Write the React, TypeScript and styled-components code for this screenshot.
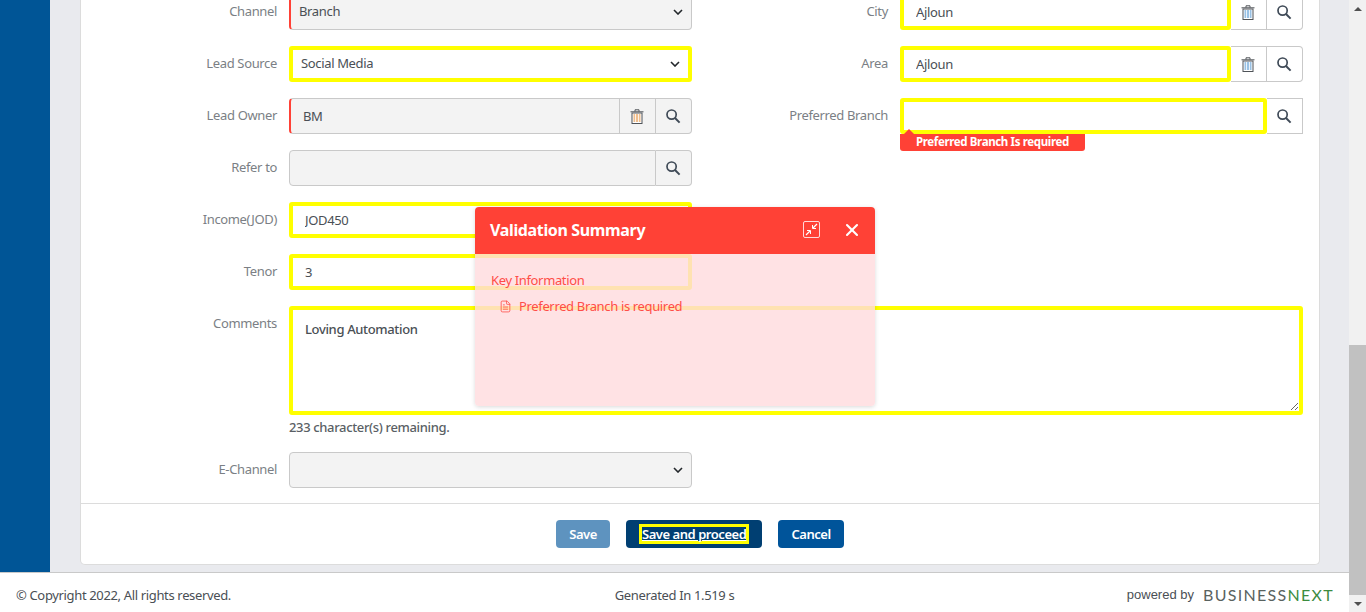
import React from 'react';
import styled, { createGlobalStyle, css } from 'styled-components';
import { FileText, X } from 'lucide-react';

const GlobalStyle = createGlobalStyle`
  html, body {
    margin: 0;
    height: 100%;
    overflow: hidden;
    font-family: "Noto Sans", "Open Sans", sans-serif;
    font-size: 13px;
    letter-spacing: -0.35px;
    color: #4a4f55;
  }
  * {
    box-sizing: border-box;
  }
  input, select, textarea, button {
    letter-spacing: inherit;
  }
`;

const chevron = encodeURIComponent(
  '<svg xmlns="http://www.w3.org/2000/svg" width="10" height="6" viewBox="0 0 10 6"><path d="M1 1l4 4 4-4" fill="none" stroke="#23272b" stroke-width="1.6"/></svg>'
);

function SearchIcon() {
  return (
    <svg width="16" height="16" viewBox="0 0 16 16" fill="none">
      <circle cx="6.6" cy="6.6" r="4.6" stroke="#3f4a57" strokeWidth="1.7" />
      <path d="M10 10l4.6 4.6" stroke="#3f4a57" strokeWidth="2" />
    </svg>
  );
}

function TrashIcon({ tint }: { tint: string }) {
  return (
    <svg width="14" height="15" viewBox="0 0 14 15" fill="none">
      <path d="M0.5 2.8h13" stroke="#4f5358" strokeWidth="1" />
      <path d="M5 2.5V0.8h4v1.7" stroke="#4f5358" strokeWidth="1" />
      <rect x="2" y="4" width="10" height="10.5" fill="#fff" stroke="#4f5358" />
      <rect x="3.5" y="5" width="7" height="8" fill={tint} opacity="0.7" />
      <path d="M5.5 5v8M8.5 5v8" stroke="#fff" strokeWidth="0.8" />
    </svg>
  );
}

function CollapseIcon() {
  return (
    <svg width="17" height="17" viewBox="0 0 17 17" fill="none">
      <rect x="0.5" y="0.5" width="16" height="16" rx="1.5" stroke="#ffd9d9" />
      <path d="M10 7l4-4M3 14l4-4" stroke="#fff" strokeWidth="1.2" />
      <path d="M9.5 4v3.5H13M4 9.5h3.5V13" stroke="#fff" strokeWidth="1" />
    </svg>
  );
}

export default function App() {
  return (
    <Shell>
      <GlobalStyle />
      <Page>
        <Main>
          <Sidebar />
          <Content>
            <Card>
              <FormGrid>
                <Field>
                  <Label>Channel</Label>
                  <Select $required disabled defaultValue="Branch">
                    <option>Branch</option>
                  </Select>
                </Field>
                <Field>
                  <Label>City</Label>
                  <LookupGroup>
                    <TextInput $flagged defaultValue="Ajloun" />
                    <AddonButton>
                      <TrashIcon tint="#6da7d8" />
                    </AddonButton>
                    <AddonButton $last>
                      <SearchIcon />
                    </AddonButton>
                  </LookupGroup>
                </Field>

                <Field>
                  <Label>Lead Source</Label>
                  <Select $flagged defaultValue="Social Media">
                    <option>Social Media</option>
                  </Select>
                </Field>
                <Field>
                  <Label>Area</Label>
                  <LookupGroup>
                    <TextInput $flagged defaultValue="Ajloun" />
                    <AddonButton>
                      <TrashIcon tint="#6da7d8" />
                    </AddonButton>
                    <AddonButton $last>
                      <SearchIcon />
                    </AddonButton>
                  </LookupGroup>
                </Field>

                <Field>
                  <Label>Lead Owner</Label>
                  <LookupGroup>
                    <TextInput $required $joined readOnly defaultValue="BM" />
                    <AddonButton $muted>
                      <TrashIcon tint="#e8a25e" />
                    </AddonButton>
                    <AddonButton $muted $last>
                      <SearchIcon />
                    </AddonButton>
                  </LookupGroup>
                </Field>
                <Field>
                  <Label>Preferred Branch</Label>
                  <LookupGroup>
                    <TextInput $flagged />
                    <AddonButton $last $square>
                      <SearchIcon />
                    </AddonButton>
                    <ErrorTip>Preferred Branch Is required</ErrorTip>
                  </LookupGroup>
                </Field>

                <Field>
                  <Label>Refer to</Label>
                  <LookupGroup>
                    <TextInput $muted $joined readOnly />
                    <AddonButton $muted $last>
                      <SearchIcon />
                    </AddonButton>
                  </LookupGroup>
                </Field>
                <span />

                <Field>
                  <Label>Income(JOD)</Label>
                  <TextInput $flagged defaultValue="JOD450" />
                </Field>
                <span />

                <Field>
                  <Label>Tenor</Label>
                  <TextInput $flagged defaultValue="3" />
                </Field>
                <span />

                <WideField>
                  <Label>Comments</Label>
                  <div>
                    <CommentBox defaultValue="Loving Automation" />
                    <Hint>233 character(s) remaining.</Hint>
                  </div>
                </WideField>

                <Field>
                  <Label>E-Channel</Label>
                  <Select $muted defaultValue="">
                    <option value=""></option>
                  </Select>
                </Field>
              </FormGrid>
              <ActionBar>
                <ActionButton $tone="#5e93bf">Save</ActionButton>
                <ActionButton $tone="#003f72">
                  <FocusedLabel>Save and proceed</FocusedLabel>
                </ActionButton>
                <ActionButton $tone="#00549a">Cancel</ActionButton>
              </ActionBar>
            </Card>
          </Content>
        </Main>
        <Footer>
          <div>© Copyright 2022, All rights reserved.</div>
          <div>Generated In 1.519 s</div>
          <FooterEnd>
            <PoweredBy>powered by</PoweredBy>
            <Logo>
              BUSINESS<LogoAccent>NEXT</LogoAccent>
            </Logo>
          </FooterEnd>
        </Footer>
      </Page>
      <Scrollbar>
        <ScrollArrow>
          <ArrowUp />
        </ScrollArrow>
        <ScrollTrack>
          <ScrollThumb />
        </ScrollTrack>
        <ScrollArrow>
          <ArrowDown />
        </ScrollArrow>
      </Scrollbar>

      <SummaryModal>
        <SummaryHeader>
          <SummaryTitle>Validation Summary</SummaryTitle>
          <HeaderIcons>
            <CollapseIcon />
            <X size={20} color="#fff" strokeWidth={2.5} />
          </HeaderIcons>
        </SummaryHeader>
        <SummaryBody>
          <SummaryGroup>Key Information</SummaryGroup>
          <SummaryItem>
            <FileText size={13} strokeWidth={1.5} />
            Preferred Branch is required
          </SummaryItem>
        </SummaryBody>
      </SummaryModal>
    </Shell>
  );
}

const Shell = styled.div`
  display: flex;
  height: 612px;
  overflow: hidden;
  position: relative;
`;

const Page = styled.div`
  flex: 1;
  min-width: 0;
  display: flex;
  flex-direction: column;
`;

const Main = styled.div`
  flex: 1;
  min-height: 0;
  display: flex;
  background: #e9eaee;
  overflow: hidden;
`;

const Sidebar = styled.aside`
  width: 50px;
  flex: none;
  background: #005596;
`;

const Content = styled.main`
  flex: 1;
  min-width: 0;
  display: flex;
  flex-direction: column;
  justify-content: flex-end;
  padding: 0 29px 7px 30px;
`;

const Card = styled.section`
  background: #fff;
  border: 1px solid #dcdcdc;
  border-top: none;
  border-radius: 0 0 5px 5px;
`;

const FormGrid = styled.div`
  display: grid;
  grid-template-columns: 611px 611px;
  row-gap: 16px;
  padding-bottom: 15px;
`;

const Field = styled.div`
  display: grid;
  grid-template-columns: 196px 1fr;
  column-gap: 12px;
  align-items: start;
`;

const WideField = styled(Field)`
  grid-column: 1 / -1;
`;

const Label = styled.label`
  text-align: right;
  color: #7b7f85;
  line-height: 34px;
`;

const flaggedBorder = css`
  background-color: #fff;
  border: 4px solid #ffff00;
  border-radius: 3px;
`;

const mutedBorder = css`
  background-color: #f3f3f3;
  border: 1px solid #c9c9c9;
  border-radius: 4px;
`;

const requiredBorder = css`
  ${mutedBorder};
  border-left: 2px solid #ff4136;
`;

type ControlProps = {
  $flagged?: boolean;
  $muted?: boolean;
  $required?: boolean;
  $joined?: boolean;
};

const controlStyles = css<ControlProps>`
  width: 100%;
  height: 36px;
  font: inherit;
  color: #4a4f55;
  outline: none;
  ${(p) => p.$flagged && flaggedBorder};
  ${(p) => p.$muted && mutedBorder};
  ${(p) => p.$required && requiredBorder};
`;

const Select = styled.select<ControlProps>`
  ${controlStyles};
  appearance: none;
  padding: 0 24px 2px 8px;
  background-image: url("data:image/svg+xml,${chevron}");
  background-repeat: no-repeat;
  background-position: right 8px center;
  opacity: 1;
`;

const TextInput = styled.input<ControlProps>`
  ${controlStyles};
  flex: 1;
  min-width: 0;
  padding: 0 12px;
  ${(p) =>
    p.$joined &&
    css`
      border-top-right-radius: 0;
      border-bottom-right-radius: 0;
    `};
`;

const LookupGroup = styled.div`
  position: relative;
  display: flex;
  height: 36px;
`;

const AddonButton = styled.button<{
  $muted?: boolean;
  $last?: boolean;
  $square?: boolean;
}>`
  width: 36px;
  flex: none;
  display: flex;
  align-items: center;
  justify-content: center;
  padding: 0 2px 0 0;
  background: ${(p) => (p.$muted ? '#f3f3f3' : '#fff')};
  border: 1px solid #c9c9c9;
  border-left: none;
  border-radius: ${(p) => (p.$last && !p.$square ? '0 4px 4px 0' : '0')};
`;

const ErrorTip = styled.div`
  position: absolute;
  left: 0;
  top: 36px;
  height: 17px;
  padding: 0 16px;
  background: #ff4136;
  border-radius: 0 0 3px 3px;
  color: #fff;
  font-size: 11.5px;
  letter-spacing: -0.36px;
  font-weight: 700;
  line-height: 16px;

  &::before {
    content: '';
    position: absolute;
    left: 4px;
    top: -5px;
    border: 5px solid transparent;
    border-top: none;
    border-bottom-color: #ff4136;
  }
`;

const CommentBox = styled.textarea`
  display: block;
  width: 100%;
  height: 109px;
  padding: 10px 12px;
  font: inherit;
  font-weight: 500;
  color: #4a4f55;
  outline: none;
  ${flaggedBorder};
`;

const Hint = styled.div`
  margin-top: 3px;
  line-height: 18px;
  font-weight: 500;
  color: #5a5f65;
`;

const ActionBar = styled.div`
  height: 61px;
  border-top: 1px solid #dcdcdc;
  display: flex;
  align-items: center;
  justify-content: center;
  gap: 16px;
`;

const ActionButton = styled.button<{ $tone: string }>`
  height: 28px;
  padding: 0 13px;
  border: none;
  border-radius: 4px;
  background: ${(p) => p.$tone};
  color: #fff;
  font: inherit;
  font-weight: 600;
  letter-spacing: -0.45px;
`;

const FocusedLabel = styled.span`
  display: inline-block;
  border: 3px solid #ffff00;
  line-height: 14px;
  text-decoration: underline;
`;

const Footer = styled.footer`
  height: 40px;
  flex: none;
  background: #fff;
  border-top: 1px solid #c9c9c9;
  display: grid;
  grid-template-columns: 1fr auto 1fr;
  align-items: center;
  padding: 4px 16px 0;
  white-space: nowrap;
`;

const FooterEnd = styled.div`
  display: flex;
  justify-content: flex-end;
  align-items: center;
  gap: 9px;
`;

const PoweredBy = styled.span`
  font-family: "Liberation Sans", sans-serif;
  letter-spacing: 0;
`;

const Logo = styled.span`
  font-family: "Lato", sans-serif;
  font-size: 16px;
  letter-spacing: 1.3px;
  margin-right: -1px;
  color: #59625f;
`;

const LogoAccent = styled.span`
  color: #3c8c3f;
`;

const Scrollbar = styled.div`
  width: 17px;
  flex: none;
  background: #f1f1f1;
  display: flex;
  flex-direction: column;
`;

const ScrollArrow = styled.div`
  height: 17px;
  flex: none;
  display: flex;
  align-items: center;
  justify-content: center;
`;

const ArrowUp = styled.span`
  border: 4px solid transparent;
  border-top: none;
  border-bottom: 4px solid #505050;
`;

const ArrowDown = styled.span`
  border: 4px solid transparent;
  border-bottom: none;
  border-top: 4px solid #505050;
`;

const ScrollTrack = styled.div`
  flex: 1;
  display: flex;
  flex-direction: column;
  justify-content: flex-end;
`;

const ScrollThumb = styled.div`
  height: 250px;
  background: #c1c1c1;
`;

const SummaryModal = styled.div`
  position: absolute;
  left: 475px;
  top: 207px;
  width: 400px;
  height: 199px;
  display: flex;
  flex-direction: column;
  border-radius: 4px;
  overflow: hidden;
  box-shadow: 0 1px 4px rgba(0, 0, 0, 0.15);
`;

const SummaryHeader = styled.header`
  height: 47px;
  flex: none;
  display: flex;
  align-items: center;
  justify-content: space-between;
  padding: 0 13px 2px 15px;
  background: #ff4136;
`;

const SummaryTitle = styled.h2`
  margin: 0;
  font-size: 16px;
  font-weight: 700;
  color: #fff;
`;

const HeaderIcons = styled.div`
  display: flex;
  align-items: center;
  gap: 22px;
`;

const SummaryBody = styled.div`
  flex: 1;
  padding: 17px 16px;
  background: rgba(255, 219, 221, 0.8);
  color: #ff4d47;
`;

const SummaryGroup = styled.div`
  line-height: 18px;
`;

const SummaryItem = styled.div`
  display: flex;
  align-items: center;
  gap: 7px;
  margin-top: 8px;
  padding-left: 8px;
  line-height: 18px;
`;
